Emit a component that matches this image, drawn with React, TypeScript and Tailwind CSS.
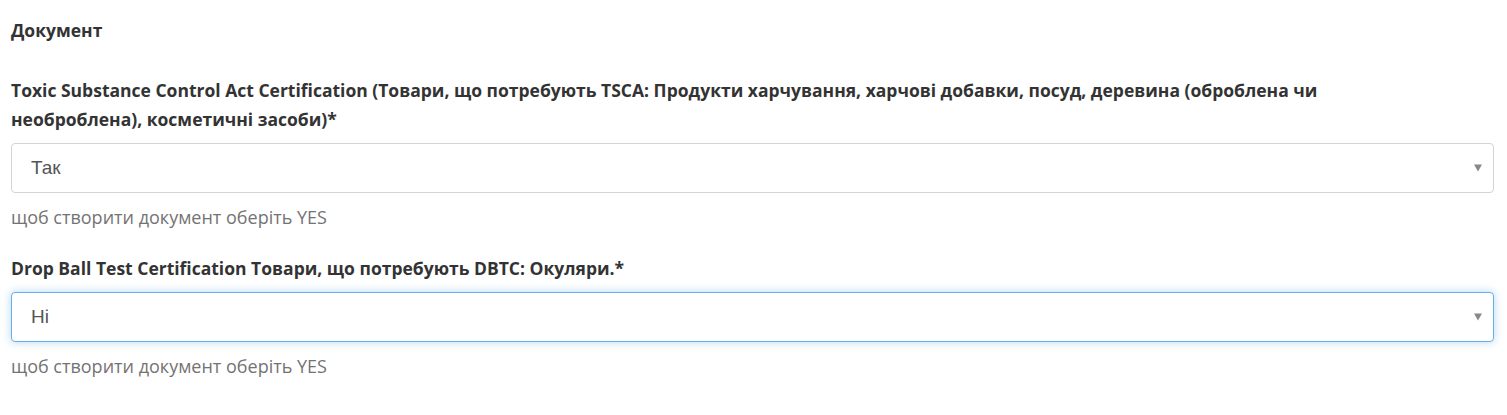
import { useState } from "react";

type Field = {
  id: string;
  label: React.ReactNode;
  value: string;
  focused?: boolean;
};

const FIELDS: Field[] = [
  {
    id: "tsca",
    label: (
      <>
        Toxic Substance Control Act Certification (Товари, що потребують TSCA: Продукти харчування, харчові добавки,
        посуд, деревина (оброблена чи
        <br />
        необроблена), косметичні засоби)*
      </>
    ),
    value: "Так",
  },
  {
    id: "dbtc",
    label: "Drop Ball Test Certification Товари, що потребують DBTC: Окуляри.*",
    value: "Ні",
    focused: true,
  },
];

function SelectField({ field }: { field: Field }) {
  const [value, setValue] = useState(field.value);
  return (
    <div className="flex flex-col">
      <label htmlFor={field.id} className="text-[17.5px] font-bold leading-[29px] text-[#333333]">
        {field.label}
      </label>
      <div className="relative mt-[9px]">
        <select
          id={field.id}
          value={value}
          onChange={(e) => setValue(e.target.value)}
          className={
            "h-[50px] w-full appearance-none rounded-[4px] border bg-white pl-[19px] pr-10 font-['Liberation_Sans',Arial,sans-serif] text-[19px] text-[#555555] outline-none " +
            (field.focused
              ? "border-[#66afe9] shadow-[0_0_8px_rgba(102,175,233,0.5)]"
              : "border-[#d4d4d4]")
          }
        >
          <option>Так</option>
          <option>Ні</option>
        </select>
        <span
          className="pointer-events-none absolute right-[12px] top-1/2 h-0 w-0 -translate-y-1/2 border-x-[4px] border-t-[7px] border-x-transparent border-t-[#888888]"
          aria-hidden="true"
        />
      </div>
      <p className="mt-[12px] text-[18px] leading-[24px] text-[#737373]">щоб створити документ оберіть YES</p>
    </div>
  );
}

export default function App() {
  return (
    <div className="min-h-[415px] bg-white px-[11px] pt-[18px] font-['Open_Sans','Noto_Sans',sans-serif]">
      <h3 className="text-[17.5px] font-bold leading-[24px] text-[#333333]">Документ</h3>
      <div className="mt-[34px] flex w-[1483px] flex-col gap-[25px]">
        {FIELDS.map((f) => (
          <SelectField key={f.id} field={f} />
        ))}
      </div>
    </div>
  );
}
